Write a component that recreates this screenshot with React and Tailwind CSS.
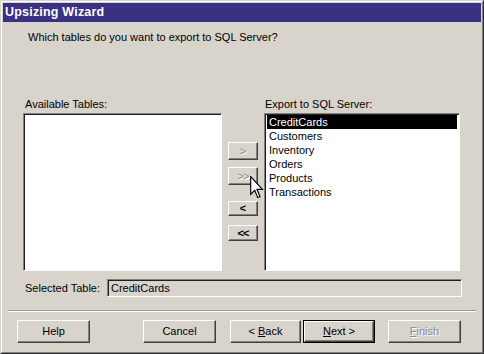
import React from "react";

const font = { fontFamily: '"Liberation Sans", Arial, sans-serif' };

const raised =
  "border border-t-white border-l-white border-r-[#404040] border-b-[#404040] shadow-[inset_-1px_-1px_0_#808080] bg-[#d8d4cc]";
const sunken =
  "border border-t-[#808080] border-l-[#808080] border-r-white border-b-white shadow-[inset_1px_1px_0_#202020]";

const Disabled = ({ children }) => (
  <span className="text-[#8c8a86] [text-shadow:1px_1px_0_#fff]">{children}</span>
);

const WinButton = ({ className = "", children }) => (
  <div className={`${raised} flex items-center justify-center text-[11px] text-black ${className}`}>
    {children}
  </div>
);

const Cursor = () => (
  <svg className="absolute left-[249px] top-[175px]" width="14" height="23" viewBox="0 0 12 20">
    <path d="M0.5 0.5 L0.5 16 L4 12.5 L6.6 18.8 L8.6 18 L6 11.6 L10.8 11.6 Z" fill="#fff" stroke="#000" strokeWidth="1" strokeLinejoin="miter" />
  </svg>
);

const tables = ["CreditCards", "Customers", "Inventory", "Orders", "Products", "Transactions"];

export default function App() {
  return (
    <div style={font} className="relative w-[484px] h-[354px] bg-[#d8d4cc] border border-t-[#d8d4cc] border-l-[#d8d4cc] border-r-[#303030] border-b-[#303030]">
      <div className="h-full border border-t-white border-l-white border-r-[#808080] border-b-[#808080] p-px flex flex-col">
        {/* Title bar */}
        <div className="h-[19px] bg-[#3b3184] text-white font-bold text-[12.5px] leading-[19px] pl-[2px] tracking-[0.2px]">
          Upsizing Wizard
        </div>

        <p className="mt-[8px] ml-[25px] text-[11px] text-black leading-[14px]">
          Which tables do you want to export to SQL Server?
        </p>

        {/* Lists */}
        <div className="mt-[54px] ml-[20px] flex">
          <div className="w-[199px]">
            <div className="ml-[2px] h-[15px] text-[11px] leading-[13px]">Available Tables:</div>
            <div className={`${sunken} h-[158px] bg-white`} />
          </div>

          <div className="ml-[6px] w-[30px] pt-[44px] flex flex-col">
            <WinButton className="h-[18px]"><Disabled>&gt;</Disabled></WinButton>
            <WinButton className="h-[18px] mt-[7px] tracking-[-1px]"><Disabled>&gt;&gt;</Disabled></WinButton>
            <WinButton className="h-[15px] mt-[16px] font-bold">&lt;</WinButton>
            <WinButton className="h-[16px] mt-[9px] font-bold tracking-[-1px]">&lt;&lt;</WinButton>
          </div>

          <div className="ml-[6px] w-[196px]">
            <div className="ml-[1px] h-[15px] text-[11px] leading-[13px]">Export to SQL Server:</div>
            <div className={`${sunken} h-[158px] bg-white pt-[1px] px-[2px]`}>
              {tables.map((t, i) => (
                <div
                  key={t}
                  className={`h-[14px] leading-[14px] text-[11px] pl-[2px] ${i === 0 ? "bg-black text-white" : "text-black"}`}
                >
                  {t}
                </div>
              ))}
            </div>
          </div>
        </div>

        {/* Selected table */}
        <div className="mt-[8px] ml-[22px] flex items-center">
          <span className="w-[82px] text-[11px]">Selected Table:</span>
          <div className={`${sunken} w-[355px] h-[18px] bg-[#d8d4cc] text-[11px] leading-[16px] pl-[3px]`}>
            CreditCards
          </div>
        </div>

        {/* Separator */}
        <div className="mt-[13px] mx-[5px] h-[2px] border-t border-t-[#9a9892] border-b border-b-white" />

        {/* Bottom buttons */}
        <div className="mt-[8px] flex">
          <WinButton className="ml-[14px] w-[73px] h-[23px]">Help</WinButton>
          <WinButton className="ml-[53px] w-[73px] h-[23px]">Cancel</WinButton>
          <WinButton className="ml-[14px] w-[71px] h-[23px]">
            &lt; <span className="underline ml-[3px]">B</span>ack
          </WinButton>
          <div className="ml-[2px] w-[72px] h-[23px] border border-black">
            <WinButton className="h-full">
              <span className="underline">N</span>ext &gt;
            </WinButton>
          </div>
          <WinButton className="ml-[13px] w-[73px] h-[23px]">
            <Disabled><span className="underline">F</span>inish</Disabled>
          </WinButton>
        </div>
      </div>
      <Cursor />
    </div>
  );
}
